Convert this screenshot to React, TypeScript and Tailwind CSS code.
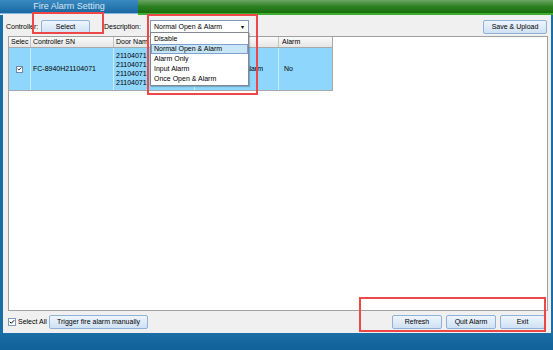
import { Check } from "lucide-react";

const font = { fontFamily: '"Liberation Sans", Arial, sans-serif' };

function Btn({ label, className }: { label: string; className: string }) {
  return (
    <div
      className={`flex h-[14px] items-center justify-center rounded-[2px] border border-[#8fb2d6] bg-gradient-to-b from-[#eef5fc] to-[#cfe1f4] text-[7px] text-black ${className}`}
    >
      {label}
    </div>
  );
}

function Box({ checked, className }: { checked?: boolean; className: string }) {
  return (
    <div className={`flex items-center justify-center border border-[#6f8aa8] bg-white ${className}`}>
      {checked && <Check className="h-[6px] w-[6px] text-black" strokeWidth={4} />}
    </div>
  );
}

const doors = ["21104071", "21104071", "21104071", "21104071"];
const options = ["Disable", "Normal Open & Alarm", "Alarm Only", "Input Alarm", "Once Open & Alarm"];

export default function App() {
  return (
    <div
      className="relative flex h-[350px] w-[553px] flex-col overflow-hidden bg-[#f0f0f0] text-[7px] text-black"
      style={font}
    >
      {/* title strip */}
      <div className="flex h-[15px] bg-[#f0f0f0]">
        <div className="flex h-[14px] w-[138px] items-center justify-center border-b border-[#86b6dc] bg-gradient-to-b from-[#3a8ac2] to-[#1a68a2] text-[9px] text-[#d3e6f5]">
          Fire Alarm Setting
        </div>
        <div className="h-[15px] flex-1 border-b-2 border-[#3fae2e] bg-gradient-to-b from-[#6aa562] via-[#2b8020] to-[#17700b]" />
      </div>

      {/* body */}
      <div className="flex flex-1 flex-col border-l-[3px] border-r-[2px] border-[#1a6ea7]">
        {/* toolbar */}
        <div className="flex h-[21px] items-center pt-[3px]">
          <span className="ml-[3px] w-[35px]">Controller:</span>
          <Btn label="Select" className="w-[49px]" />
          <span className="ml-[14px] w-[46px]">Description:</span>
          <div className="flex h-[14px] w-[99px] items-center justify-between border border-[#7f9db9] bg-white pl-[3px] pr-[4px]">
            <span>Normal Open &amp; Alarm</span>
            <span className="text-[6px]">▾</span>
          </div>
          <div className="flex-1" />
          <Btn label="Save & Upload" className="mr-[4px] w-[64px]" />
        </div>

        {/* table */}
        <div className="ml-[5px] mr-[3px] flex h-[275px] flex-col border border-[#a0a0a0] bg-white">
          <div className="flex h-[11px] w-[324px] border-b border-r border-[#a8a8a8] bg-gradient-to-b from-[#fafafa] to-[#e6e6e6]">
            <div className="flex w-[22px] items-center border-r border-[#c4c4c4] pl-[2px]">Selec</div>
            <div className="flex w-[83px] items-center border-r border-[#c4c4c4] pl-[2px]">Controller SN</div>
            <div className="flex w-[81px] items-center overflow-hidden whitespace-nowrap border-r border-[#c4c4c4] pl-[2px]">Door Nam</div>
            <div className="flex w-[84px] items-center border-r border-[#c4c4c4] pl-[2px]" />
            <div className="flex flex-1 items-center pl-[3px]">Alarm</div>
          </div>
          <div className="flex h-[43px] w-[324px] border-b border-r border-[#a8a8a8] bg-[#8fd6fc]">
            <div className="flex w-[22px] items-center justify-center border-r border-[#c8ecfd]">
              <Box checked className="h-[7px] w-[7px]" />
            </div>
            <div className="flex w-[83px] items-center border-r border-[#c8ecfd] pl-[2px]">FC-8940H21104071</div>
            <div className="flex w-[81px] flex-col justify-center overflow-hidden whitespace-nowrap border-r border-[#c8ecfd] pl-[2px] leading-[9px]">
              {doors.map((d, i) => (
                <span key={i}>{d}</span>
              ))}
            </div>
            <div className="flex w-[84px] items-center justify-end whitespace-nowrap border-r border-[#c8ecfd] pr-[15px]">
              Alarm
            </div>
            <div className="flex flex-1 items-center pl-[5px]">No</div>
          </div>
        </div>

        {/* footer */}
        <div className="flex h-[22px] items-center">
          <Box checked className="ml-[5px] h-[8px] w-[8px] border-[#7d9bbd]" />
          <span className="ml-[2px] w-[31px]">Select All</span>
          <Btn label="Trigger fire alarm manually" className="w-[99px]" />
          <div className="flex-1" />
          <Btn label="Refresh" className="w-[50px]" />
          <Btn label="Quit Alarm" className="ml-[4px] w-[50px]" />
          <Btn label="Exit" className="ml-[4px] mr-[6px] w-[45px]" />
        </div>
      </div>

      {/* bottom band */}
      <div className="h-[17px] bg-gradient-to-b from-[#1b6ea6] to-[#10609a]" />

      {/* open dropdown list */}
      <div className="absolute left-[150px] top-[32px] flex w-[99px] flex-col border border-[#828790] bg-white py-[1px] shadow-[1px_1px_1px_rgba(0,0,0,0.2)]">
        {options.map((o, i) => (
          <div
            key={o}
            className={`flex h-[10px] items-center pl-[2px] ${i === 1 ? "border border-[#7da2ce] bg-[#c9e6f8]" : "border border-transparent"}`}
          >
            {o}
          </div>
        ))}
      </div>

      {/* red annotation frames */}
      <div className="absolute left-[32px] top-[12px] h-[22px] w-[72px] border-2 border-[#ee4747]" />
      <div className="absolute left-[147px] top-[14px] h-[81px] w-[111px] border-2 border-[#ee4747]" />
      <div className="absolute left-[359px] top-[297px] h-[35px] w-[187px] border-2 border-[#ee4747]" />
    </div>
  );
}
